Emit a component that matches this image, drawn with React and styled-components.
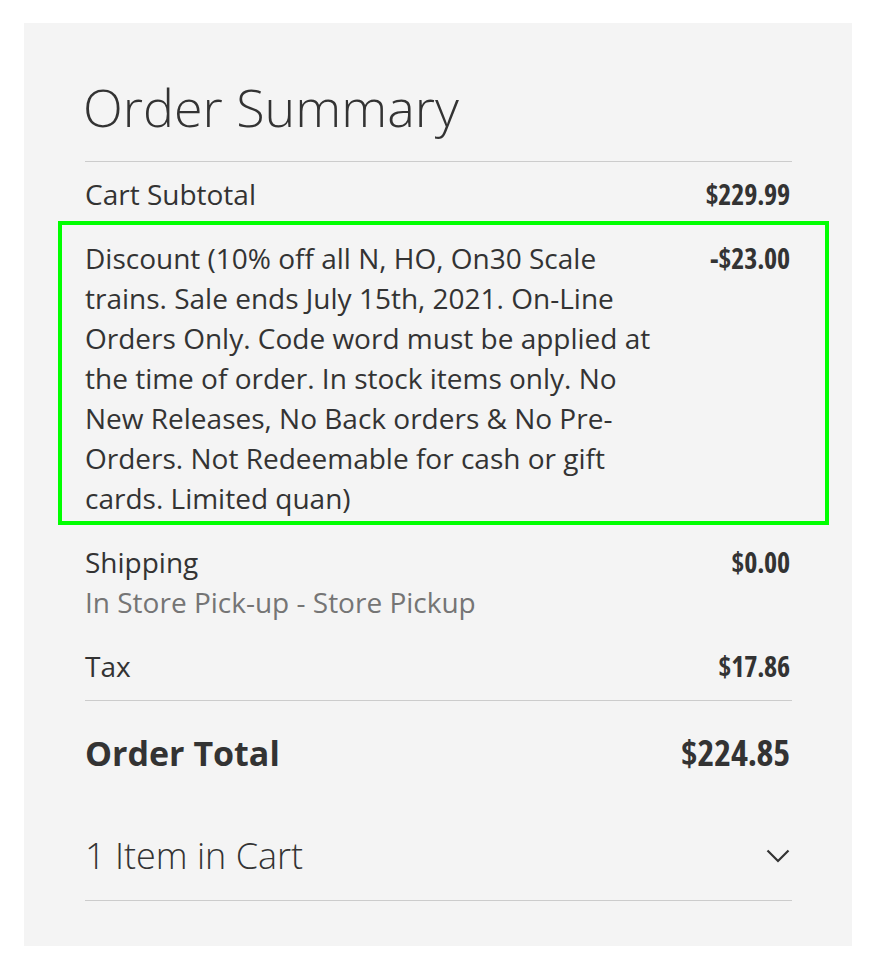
import React from "react";
import styled, { createGlobalStyle } from "styled-components";

const Global = createGlobalStyle`
  html, body { margin: 0; padding: 0; background: #ffffff; }
  body {
    font-family: "Open Sans", "Noto Sans", sans-serif;
    color: #333333;
    -webkit-font-smoothing: antialiased;
  }
`;

const Page = styled.div`
  padding: 23px 24px 0 24px;
`;

const Panel = styled.section`
  background: #f4f4f4;
  padding: 54px 60px 45px 61px;
`;

const Title = styled.h1`
  margin: 0 0 24px -2px;
  font-size: 52px;
  font-weight: 300;
  line-height: 60px;
  color: #333;
`;

const Totals = styled.div`
  border-top: 1px solid #cccccc;
  display: flex;
  flex-direction: column;
  padding-bottom: 2px;
`;

const Row = styled.div`
  position: relative;
  display: flex;
  justify-content: space-between;
  align-items: flex-start;
  gap: 40px;
  padding: 12px 0;
  font-size: 28px;
  line-height: 40px;
`;

const Highlight = styled.div`
  position: absolute;
  top: -5px;
  bottom: 5px;
  left: -27px;
  right: -37px;
  border: 4px solid #00ff00;
  pointer-events: none;
`;

const Label = styled.div`
  flex: 1;
  max-width: ${(p) => p.$max || "none"};
  font-weight: 400;
`;

const Sub = styled.div`
  color: #757575;
`;

const Amount = styled.div`
  font-weight: 700;
  font-stretch: 75%;
  white-space: nowrap;
  padding-right: 2px;
  font-size: ${(p) => (p.$big ? "36px" : "28px")};
  letter-spacing: -0.2px;
`;

const GrandRow = styled.div`
  display: flex;
  justify-content: space-between;
  align-items: center;
  border-top: 1px solid #cccccc;
  padding: 32px 0 0 0;
  line-height: 40px;
`;

const GrandLabel = styled.div`
  font-size: 34px;
  font-weight: 700;
`;

const CartToggle = styled.button`
  all: unset;
  display: flex;
  justify-content: space-between;
  align-items: center;
  width: 100%;
  box-sizing: border-box;
  margin-top: 58px;
  padding: 0 2px 19px 0;
  border-bottom: 1px solid #cccccc;
  font-family: "Open Sans", sans-serif;
  font-size: 36px;
  font-weight: 300;
  line-height: 50px;
  color: #333;
  cursor: pointer;
`;

const Chevron = () => (
  <svg width="24" height="14" viewBox="0 0 24 14" fill="none">
    <path d="M1.5 1.5 L12 12 L22.5 1.5" stroke="#333" strokeWidth="2.2" />
  </svg>
);

export default function App() {
  return (
    <Page>
      <Global />
      <Panel>
        <Title>Order Summary</Title>
        <Totals>
          <Row>
            <Label>Cart Subtotal</Label>
            <Amount>$229.99</Amount>
          </Row>
          <Row>
            <Highlight />
            <Label $max="570px">
              Discount (10% off all N, HO, On30 Scale trains. Sale ends July
              15th, 2021. On-Line Orders Only. Code word must be applied at the
              time of order. In stock items only. No New Releases, No Back
              orders &amp; No Pre-Orders. Not Redeemable for cash or gift cards.
              Limited quan)
            </Label>
            <Amount>-$23.00</Amount>
          </Row>
          <Row>
            <Label>
              Shipping
              <Sub>In Store Pick-up - Store Pickup</Sub>
            </Label>
            <Amount>$0.00</Amount>
          </Row>
          <Row>
            <Label>Tax</Label>
            <Amount>$17.86</Amount>
          </Row>
        </Totals>
        <GrandRow>
          <GrandLabel>Order Total</GrandLabel>
          <Amount $big>$224.85</Amount>
        </GrandRow>
        <CartToggle>
          <span>1 Item in Cart</span>
          <Chevron />
        </CartToggle>
      </Panel>
    </Page>
  );
}
